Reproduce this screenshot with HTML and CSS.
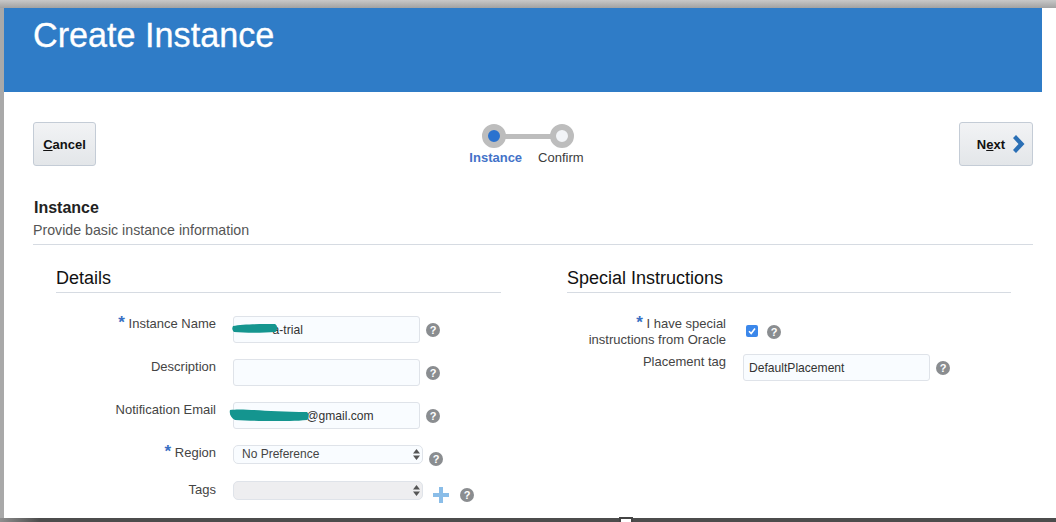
FILE: index.html
```html
<!DOCTYPE html>
<html>

<head>
    <title>Create Instance</title>
    <link rel="stylesheet" href="styles.css">
</head>

<body>
    <div class="top_shadow"></div>
    <div class="frame">
        <div class="panel">
            <header class="banner">
                <h1>Create Instance</h1>
            </header>

            <div class="toolbar">
                <button class="btn btn_cancel" type="button"><u>C</u>ancel</button>
                <div class="train">
                    <div class="train_dots">
                        <span class="dot dot_active"></span>
                        <span class="train_line"></span>
                        <span class="dot"></span>
                    </div>
                    <div class="train_labels">
                        <span class="train_current">Instance</span>
                        <span class="train_next">Confirm</span>
                    </div>
                </div>
                <button class="btn btn_next" type="button">
                    <span>N<u>e</u>xt</span>
                    <svg width="12" height="18" viewBox="0 0 12 18">
                        <path d="M0 3l3-3 8.500 9L3 18l-3-3 5.500-6z" fill="#2a6fb5" />
                    </svg>
                </button>
            </div>

            <div class="section_head">
                <h2>Instance</h2>
                <p>Provide basic instance information</p>
            </div>

            <div class="columns">
                <section class="col_details">
                    <h3>Details</h3>
                    <div class="row">
                        <label><span class="req">*</span> Instance Name</label>
                        <div class="field">
                            <input type="text" value="          a-trial">
                            <svg class="smudge smudge_name" width="46" height="9" viewBox="0 0 46 9">
                                <path d="M1 2C10 0 30 0 43 0c3 2 3 6 0 8-12 1-30 1-41 0C0 6 0 4 1 2z" fill="#14958f" />
                            </svg>
                        </div>
                        <span class="help">?</span>
                    </div>
                    <div class="row">
                        <label>Description</label>
                        <div class="field"><input type="text"></div>
                        <span class="help">?</span>
                    </div>
                    <div class="row">
                        <label>Notification Email</label>
                        <div class="field">
                            <input type="text" value="                    @gmail.com">
                            <svg class="smudge smudge_email" width="80" height="12" viewBox="0 0 80 12">
                                <path d="M1 1C14-1 40 3 78 3c2 2 2 6 0 8-20 2-50 1-72 0C2 9 0 5 1 1z" fill="#14958f" />
                            </svg>
                        </div>
                        <span class="help">?</span>
                    </div>
                    <div class="row row_region">
                        <label><span class="req">*</span> Region</label>
                        <div class="select_wrap">
                            <select>
                                <option>No Preference</option>
                            </select>
                            <svg class="updown" width="7" height="11" viewBox="0 0 7 11">
                                <path d="M3.500 0l3.500 4.500H0zM3.500 11L0 6.500h7z" fill="#555" />
                            </svg>
                        </div>
                        <span class="help">?</span>
                    </div>
                    <div class="row row_tags">
                        <label>Tags</label>
                        <div class="select_wrap">
                            <select class="select_off" disabled>
                                <option></option>
                            </select>
                            <svg class="updown" width="7" height="11" viewBox="0 0 7 11">
                                <path d="M3.500 0l3.500 4.500H0zM3.500 11L0 6.500h7z" fill="#555" />
                            </svg>
                        </div>
                        <svg class="plus" width="16" height="16" viewBox="0 0 16 16">
                            <path d="M6 0h4v6h6v4h-6v6H6v-6H0V6h6z" fill="#8abde8" />
                        </svg>
                        <span class="help help_tags">?</span>
                    </div>
                </section>

                <section class="col_special">
                    <h3>Special Instructions</h3>
                    <div class="row_check">
                        <label><span class="req">*</span> I have special<br>instructions from Oracle</label>
                        <span class="check">
                            <svg width="12" height="12" viewBox="0 0 12 12">
                                <path d="M3 6.200l2.200 2.300L9 3.600" fill="none" stroke="#fff" stroke-width="1.600" />
                            </svg>
                        </span>
                        <span class="help">?</span>
                    </div>
                    <div class="row row_tag">
                        <label>Placement tag</label>
                        <div class="field"><input type="text" value="DefaultPlacement"></div>
                        <span class="help">?</span>
                    </div>
                </section>
            </div>
        </div>
    </div>
    <div class="bottom_bar"></div>
    <div class="notch"></div>
</body>

</html>
```

FILE: styles.css
```css
html,
body {
    margin: 0;
    height: 522px;
    overflow: hidden;
}

body {
    font-family: "Liberation Sans", Arial, sans-serif;
    background-color: #fff;
    position: relative;
    display: flex;
    flex-direction: column;
}

.top_shadow {
    height: 8px;
    background: linear-gradient(#c8c8c8, #a2a2a2);
}

.frame {
    height: 510px;
    border-left: 4px solid #a9a9a9;
    overflow: hidden;
}

.bottom_bar {
    height: 4px;
    background: linear-gradient(to right, #8f8f8f, #4c4c4c 40px);
}

/* little white tab sitting on the bottom edge */
.notch {
    position: absolute;
    left: 619px;
    top: 517px;
    width: 10px;
    height: 5px;
    background-color: #fff;
    border: solid #444;
    border-width: 2px 2px 0;
}

.panel {
    width: 1038px;
}

.banner {
    height: 84px;
    background-color: #2f7cc7;
    padding-left: 29px;
}

.banner h1 {
    margin: 0;
    padding-top: 7px;
    color: #fff;
    font-size: 34.2px;
    font-weight: normal;
    line-height: 40px;
    -webkit-text-stroke: 0.3px #fff;
}

.toolbar {
    display: grid;
    grid-template-columns: 63px 1fr 74px;
    align-items: start;
    margin: 30px 9px 0 29px;
}

.btn {
    height: 44px;
    padding: 0;
    font-family: inherit;
    font-size: 13px;
    font-weight: bold;
    color: #111;
    background: linear-gradient(#f2f3f5, #e3e6e9);
    border: 1px solid #c4ccd6;
    border-radius: 3px;
}

.btn_next {
    display: flex;
    align-items: center;
    justify-content: flex-end;
    gap: 8px;
    padding-right: 7px;
}

.train {
    margin-top: 2px;
    display: flex;
    flex-direction: column;
    align-items: center;
    width: 130px;
    justify-self: center;
}

.train_dots {
    display: flex;
    align-items: center;
}

.dot {
    width: 12px;
    height: 12px;
    border: 6px solid #bdbdbd;
    border-radius: 50%;
    background-color: #f2f4f7;
}

.dot_active {
    background-color: #2a72cf;
}

.train_line {
    width: 46px;
    height: 5px;
    margin: 0 -1px;
    background-color: #bdbdbd;
}

.train_labels {
    display: flex;
    gap: 16px;
    margin: 2px 2px 0 0;
    font-size: 13px;
    line-height: 15px;
}

.train_current {
    color: #4372c8;
    font-weight: bold;
}

.train_next {
    color: #3c3c3c;
}

.section_head {
    margin: 32px 9px 0 29px;
    padding-bottom: 6px;
    border-bottom: 1px solid #d6dbe2;
}

.section_head h2 {
    margin: 0 0 0 1px;
    font-size: 16px;
    line-height: 19px;
    color: #222;
}

.section_head p {
    margin: 5px 0 0;
    font-size: 14.200px;
    line-height: 16px;
    color: #555;
}

.columns {
    display: flex;
    margin-left: 52px;
}

.col_details {
    width: 445px;
}

.col_special {
    width: 444px;
    margin-left: 66px;
}

h3 {
    margin: 23px 0 23px;
    padding-bottom: 4px;
    font-size: 18px;
    font-weight: normal;
    line-height: 20px;
    color: #111;
    border-bottom: 1px solid #d6dbe2;
}

label {
    font-size: 13px;
    line-height: 16px;
    color: #444;
    text-align: right;
}

.req {
    color: #3a70c4;
    font-size: 17px;
    line-height: 0;
    font-weight: bold;
}

.row {
    display: flex;
    align-items: flex-start;
    height: 43px;
}

.row label {
    width: 160px;
    margin-right: 17px;
}

.row_region {
    height: 36px;
}

.row_tags label {
    margin-top: 1px;
}

.field {
    position: relative;
    width: 187px;
}

input[type="text"] {
    display: block;
    width: 187px;
    height: 27px;
    box-sizing: border-box;
    padding: 0 5px;
    font-family: inherit;
    font-size: 12.100px;
    color: #333;
    background-color: #f9fcff;
    border: 1px solid #dfe3e9;
    border-radius: 3px;
}

/* scribbles covering the private parts of the values */
.smudge {
    position: absolute;
    left: -1px;
    top: 8px;
}

.smudge_email {
    left: -4px;
    top: 7px;
}

.select_wrap {
    position: relative;
    width: 190px;
}

select {
    display: block;
    width: 190px;
    height: 19px;
    padding: 0 8px 2px;
    font-family: inherit;
    font-size: 12px;
    color: #444;
    background-color: #f9fcff;
    border: 1px solid #dfe3e9;
    border-radius: 5px;
    appearance: none;
}

.select_off {
    background-color: #eeeef0;
    opacity: 1;
}

.updown {
    position: absolute;
    right: 3px;
    top: 4px;
}

.help {
    flex: none;
    width: 14px;
    height: 14px;
    margin: 7px 0 0 6px;
    border-radius: 50%;
    background-color: #8a8d90;
    color: #fff;
    font-size: 11px;
    font-weight: bold;
    line-height: 14px;
    text-align: center;
}

.plus {
    flex: none;
    margin: 6px 0 0 10px;
}

.help_tags {
    margin-left: 11px;
}

.row_check {
    display: flex;
    align-items: flex-start;
}

.row_check label {
    width: 159px;
    margin-right: 20px;
}

.check {
    width: 12px;
    height: 12px;
    margin-top: 9px;
    background-color: #3b87ea;
    border-radius: 2px;
    display: block;
}

.check svg {
    display: block;
}

.row_check .help {
    margin: 9px 0 0 9px;
}

.row_tag {
    margin-top: 6px;
}

.row_tag label {
    width: 159px;
    margin-right: 17px;
}
```
